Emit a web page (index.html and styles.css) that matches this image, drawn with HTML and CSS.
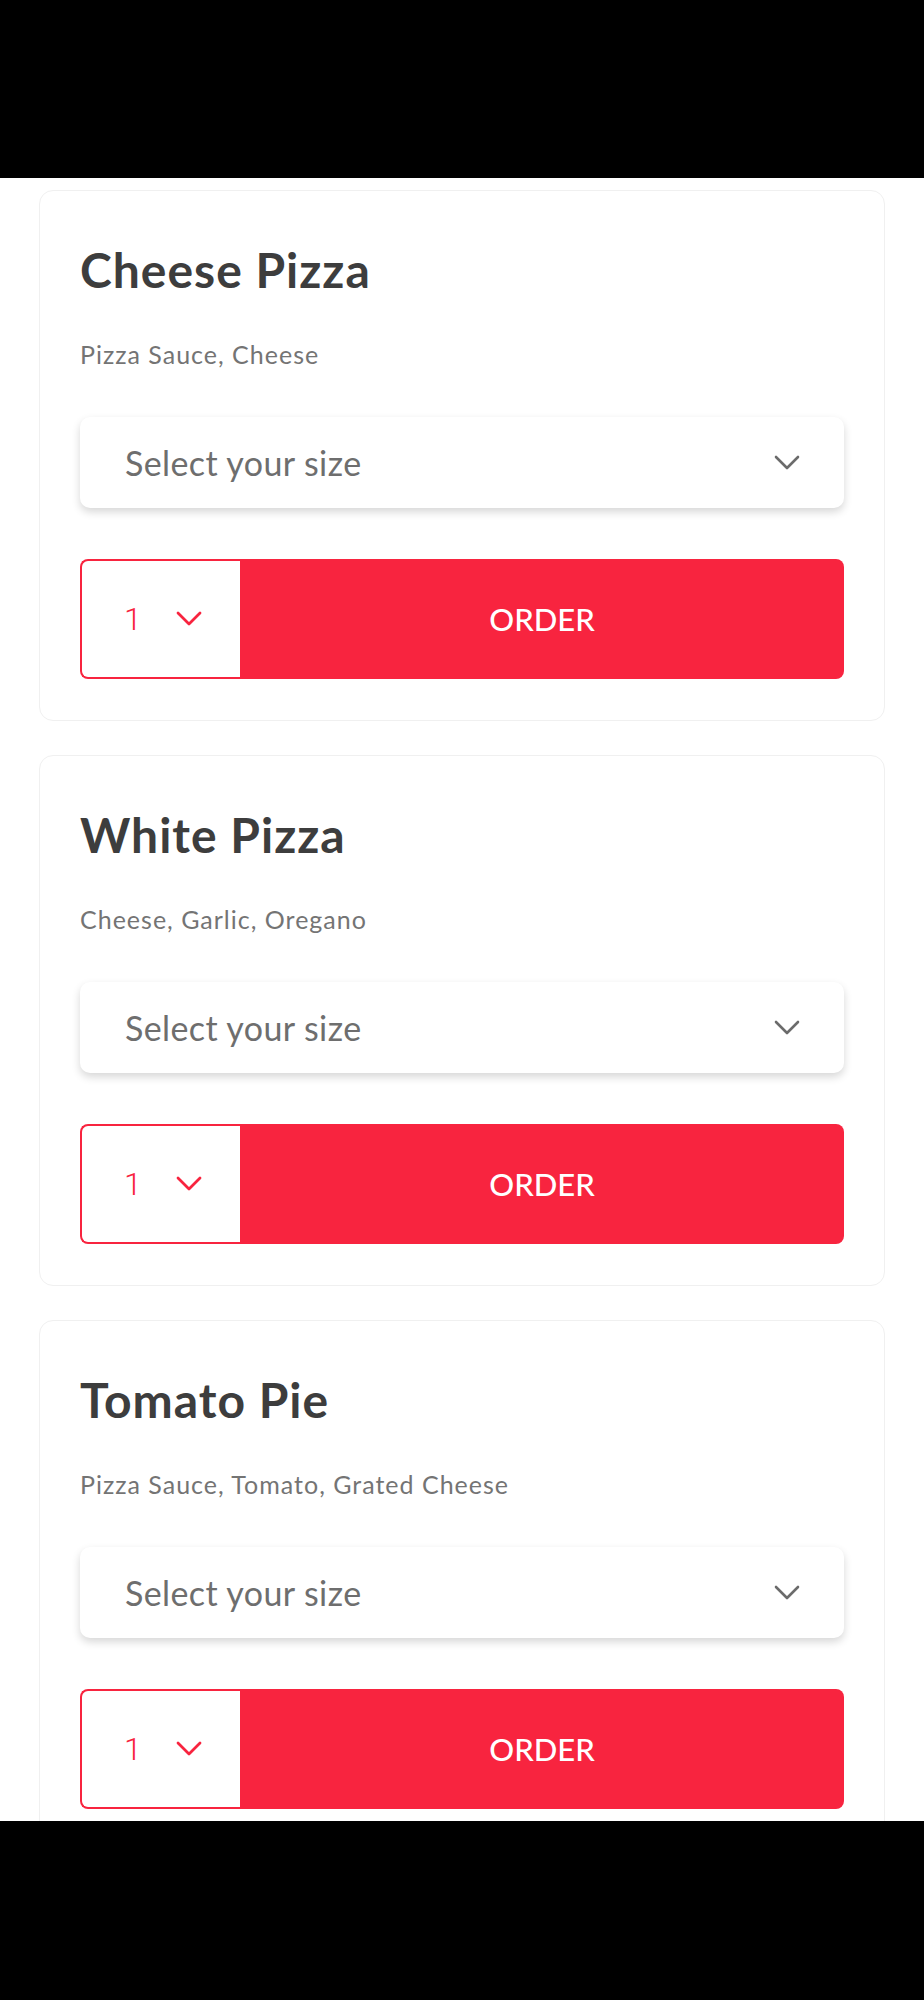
FILE: index.html
```html
<!DOCTYPE html>
<html>
<head>
<link rel="stylesheet" href="styles.css">
</head>
<body>
<div class="screen-bar"></div>
<main class="viewport">
  <div class="menu">
    <div class="pizza-card">
      <h2 class="pizza-name">Cheese Pizza</h2>
      <p class="pizza-toppings">Pizza Sauce, Cheese</p>
      <div class="size-select">
        <span>Select your size</span>
        <svg class="chevron" width="26" height="16" viewBox="0 0 26 16"><path d="M2 2 L13 13 L24 2" fill="none" stroke="#6b6b6b" stroke-width="2.6" stroke-linecap="round" stroke-linejoin="round"/></svg>
      </div>
      <div class="order-row">
        <div class="qty">
          <span>1</span>
          <svg width="26" height="16" viewBox="0 0 26 16"><path d="M2 2 L13 13 L24 2" fill="none" stroke="#f8243f" stroke-width="2.8" stroke-linecap="round" stroke-linejoin="round"/></svg>
        </div>
        <button class="order-btn">ORDER</button>
      </div>
    </div>

    <div class="pizza-card">
      <h2 class="pizza-name">White Pizza</h2>
      <p class="pizza-toppings">Cheese, Garlic, Oregano</p>
      <div class="size-select">
        <span>Select your size</span>
        <svg class="chevron" width="26" height="16" viewBox="0 0 26 16"><path d="M2 2 L13 13 L24 2" fill="none" stroke="#6b6b6b" stroke-width="2.6" stroke-linecap="round" stroke-linejoin="round"/></svg>
      </div>
      <div class="order-row">
        <div class="qty">
          <span>1</span>
          <svg width="26" height="16" viewBox="0 0 26 16"><path d="M2 2 L13 13 L24 2" fill="none" stroke="#f8243f" stroke-width="2.8" stroke-linecap="round" stroke-linejoin="round"/></svg>
        </div>
        <button class="order-btn">ORDER</button>
      </div>
    </div>

    <div class="pizza-card">
      <h2 class="pizza-name">Tomato Pie</h2>
      <p class="pizza-toppings">Pizza Sauce, Tomato, Grated Cheese</p>
      <div class="size-select">
        <span>Select your size</span>
        <svg class="chevron" width="26" height="16" viewBox="0 0 26 16"><path d="M2 2 L13 13 L24 2" fill="none" stroke="#6b6b6b" stroke-width="2.6" stroke-linecap="round" stroke-linejoin="round"/></svg>
      </div>
      <div class="order-row">
        <div class="qty">
          <span>1</span>
          <svg width="26" height="16" viewBox="0 0 26 16"><path d="M2 2 L13 13 L24 2" fill="none" stroke="#f8243f" stroke-width="2.8" stroke-linecap="round" stroke-linejoin="round"/></svg>
        </div>
        <button class="order-btn">ORDER</button>
      </div>
    </div>
  </div>
</main>
<div class="screen-bar bottom"></div>
</body>
</html>
```

FILE: styles.css
```css
* {
  box-sizing: border-box;
}

body {
  font-family: Lato, "Noto Sans", sans-serif;
  margin: 0;
  background-color: #000;
}

.screen-bar {
  height: 178px;
  background-color: #000;
}

.screen-bar.bottom {
  height: 179px;
}

.viewport {
  height: 1643px;
  overflow: hidden;
  background-color: #fff;
}

.menu {
  display: flex;
  flex-direction: column;
  gap: 34px;
  padding: 12px 39px 0;
}

.pizza-card {
  border: 1px solid #f0f0f0;
  border-radius: 14px;
  padding: 50px 40px 41px;
}

.pizza-name {
  margin: 0;
  font-size: 48px;
  line-height: 58px;
  font-weight: 700;
  letter-spacing: 1px;
  color: #3d3d3d;
}

.pizza-toppings {
  margin: 40px 0 0;
  font-size: 25px;
  line-height: 30px;
  letter-spacing: 1px;
  color: #747474;
}

.size-select {
  margin-top: 48px;
  height: 91px;
  border-radius: 10px;
  background-color: #fff;
  box-shadow: 0 4px 8px rgba(0, 0, 0, 0.16);
  display: flex;
  align-items: center;
  justify-content: space-between;
  padding: 0 44px 0 45px;
  font-size: 34px;
  letter-spacing: 0.4px;
  color: #6e6e6e;
}

.order-row {
  margin-top: 51px;
  height: 120px;
  display: flex;
}

.qty {
  width: 160px;
  border: 2px solid #f8243f;
  border-right: none;
  border-radius: 8px 0 0 8px;
  display: flex;
  align-items: center;
  gap: 34px;
  padding-left: 42px;
  color: #f8243f;
  font-family: Roboto, sans-serif;
  font-size: 32px;
  font-weight: 300;
}

.order-btn {
  flex: 1;
  border: none;
  border-radius: 0 8px 8px 0;
  background-color: #f8243f;
  color: #fff;
  font-family: inherit;
  font-size: 31px;
  font-weight: 500;
}
```
